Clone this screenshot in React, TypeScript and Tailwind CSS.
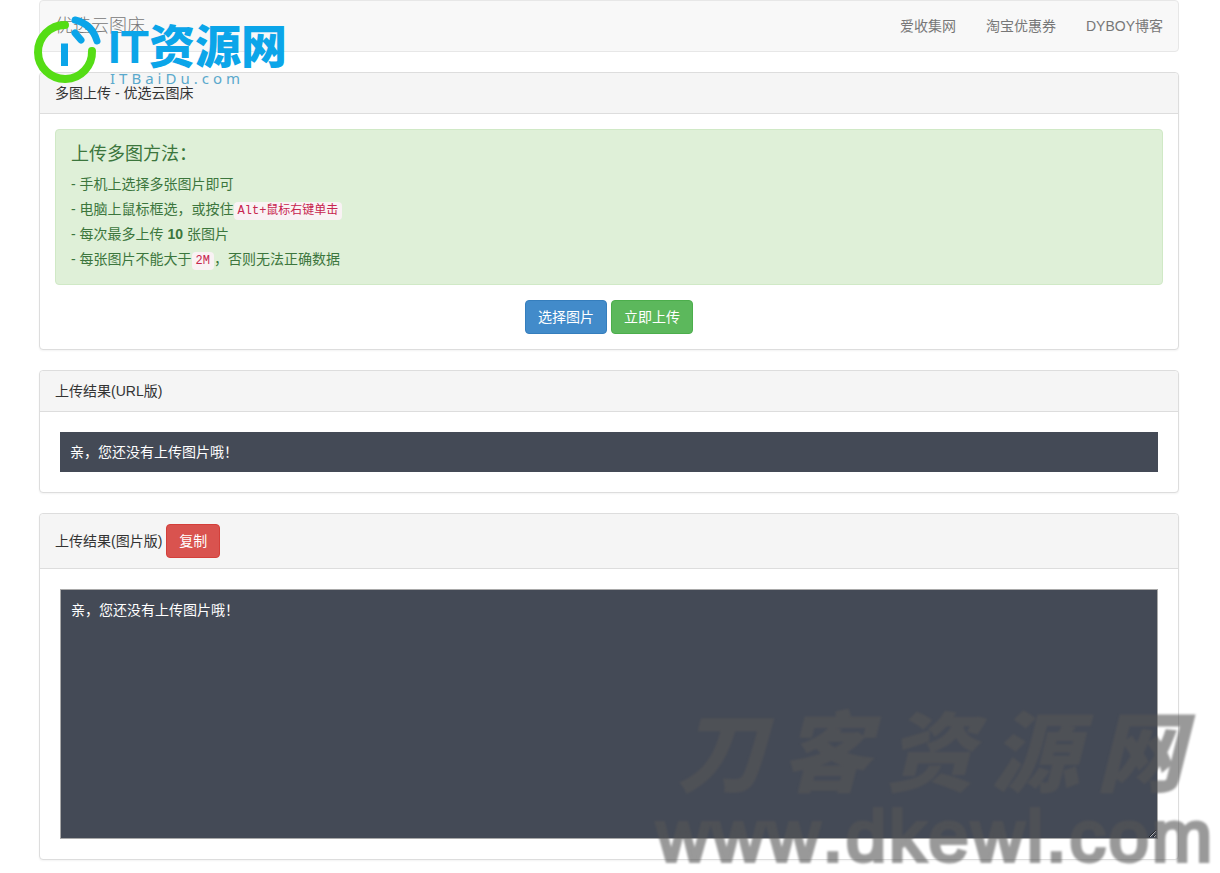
import React, { useState } from 'react';

const EMPTY_MESSAGE = '亲，您还没有上传图片哦！';

const navLinks = [
  { label: '爱收集网', href: '#aishouji' },
  { label: '淘宝优惠券', href: '#taobao' },
  { label: 'DYBOY博客', href: '#blog' },
];

const Panel: React.FC<{ heading: React.ReactNode; children: React.ReactNode }> = ({ heading, children }) => (
  <section className="rounded border border-[#ddd] bg-white shadow-xs">
    <div className="flex items-center gap-1 rounded-t border-b border-[#ddd] bg-[#f5f5f5] px-[15px] py-[10px]">
      {heading}
    </div>
    {children}
  </section>
);

const Code: React.FC<{ children: React.ReactNode }> = ({ children }) => (
  <code className="rounded bg-[#f9f2f4] px-1 py-[2px] font-['Liberation_Mono','Noto_Sans_CJK_SC',monospace] text-xs text-[#c7254e]">
    {children}
  </code>
);

const SiteLogo: React.FC = () => (
  <div aria-hidden="true" className="pointer-events-none absolute top-[10px] left-[30px] flex text-[#0ba5e9]">
    <svg width="78" height="78" viewBox="0 0 78 78" fill="none" strokeWidth="8" strokeLinecap="round">
      <path d="M35 15A27 27 0 1 0 62 41" stroke="#55dd15" />
      <path d="M45 10Q62 14 67 31" stroke="#0ba5e9" strokeWidth="7" />
      <path d="M45 23L51 30" stroke="#0ba5e9" strokeWidth="7" />
      <path d="M34.500 33.500V56" stroke="#0ba5e9" strokeWidth="7" strokeLinecap="butt" />
    </svg>
    <div className="pt-[14px]">
      <div className="text-[46px] leading-[46px] font-black">IT资源网</div>
      <div className="pl-[2px] font-['Noto_Sans',sans-serif] text-[15px] leading-4 tracking-[4px] text-[#5aa9cc]">
        ITBaiDu.com
      </div>
    </div>
  </div>
);

const Watermark: React.FC = () => (
  <div
    aria-hidden="true"
    className="pointer-events-none absolute right-[8px] bottom-0 w-[555px] text-[#565656] opacity-60 blur-[1px]"
  >
    <div className="flex justify-between pr-7 pl-5 text-[88px] leading-[90px] font-black italic">
      {'刀客资源网'.split('').map(char => (
        <span key={char}>{char}</span>
      ))}
    </div>
    <div className="flex justify-between text-[72px] leading-[72px] [-webkit-text-stroke:4px_#565656]">
      {'www.dkewl.com'.split('').map((char, i) => (
        <span key={i}>{char}</span>
      ))}
    </div>
  </div>
);

const App: React.FC = () => {
  const [result, setResult] = useState(EMPTY_MESSAGE);

  const copyResult = () => {
    navigator.clipboard?.writeText(result);
  };

  return (
    <div className="relative overflow-hidden bg-white pr-[2px] pb-3 font-['Liberation_Sans','Noto_Sans_CJK_SC',sans-serif] text-sm leading-5 text-[#333]">
      <div className="mx-auto max-w-[1140px]">
        {/* Navbar */}
        <header className="mb-5 flex items-center justify-between rounded border border-[#e7e7e7] bg-[#f8f8f8] px-[15px] py-[15px] text-[#777]">
          <a href="#home" className="text-lg leading-5 font-light">优选云图床</a>
          <nav className="flex gap-[30px]">
            {navLinks.map(link => (
              <a key={link.label} href={link.href}>{link.label}</a>
            ))}
          </nav>
        </header>

        <main className="flex flex-col gap-5">
          {/* Upload form */}
          <Panel heading={<h1>多图上传 - 优选云图床</h1>}>
            <div className="p-[15px]">
              <div className="mb-[15px] rounded border border-[#d0e9c6] bg-[#dff0d8] px-[15px] pt-[14px] pb-3 leading-[25px] text-[#3c763d]">
                <h2 className="mb-2 text-lg leading-5">上传多图方法：</h2>
                <p>- 手机上选择多张图片即可</p>
                <p>- 电脑上鼠标框选，或按住<Code>Alt+鼠标右键单击</Code></p>
                <p>- 每次最多上传 <strong>10</strong> 张图片</p>
                <p>- 每张图片不能大于<Code>2M</Code>，否则无法正确数据</p>
              </div>
              <div className="flex justify-center gap-1">
                <button type="button" className="rounded border border-[#357ebd] bg-[#428bca] px-3 py-[6px] text-white">
                  选择图片
                </button>
                <button type="button" className="rounded border border-[#4cae4c] bg-[#5cb85c] px-3 py-[6px] text-white">
                  立即上传
                </button>
              </div>
            </div>
          </Panel>

          {/* Results as plain URLs */}
          <Panel heading={<h2>上传结果(URL版)</h2>}>
            <div className="p-5">
              <div className="bg-[#444a56] p-[10px] text-white">{EMPTY_MESSAGE}</div>
            </div>
          </Panel>

          {/* Results as image tags */}
          <Panel
            heading={
              <>
                <label htmlFor="result">上传结果(图片版)</label>
                <button
                  type="button"
                  onClick={copyResult}
                  className="rounded border border-[#d43f3a] bg-[#d9534f] px-3 py-[6px] text-white"
                >
                  复制
                </button>
              </>
            }
          >
            <div className="p-5">
              <textarea
                id="result"
                value={result}
                onChange={e => setResult(e.target.value)}
                className="block h-[250px] w-full border border-[#a9a9a9] bg-[#444a56] p-[10px] text-white"
              />
            </div>
          </Panel>
        </main>
      </div>

      <SiteLogo />
      <Watermark />
    </div>
  );
};

export default App;
